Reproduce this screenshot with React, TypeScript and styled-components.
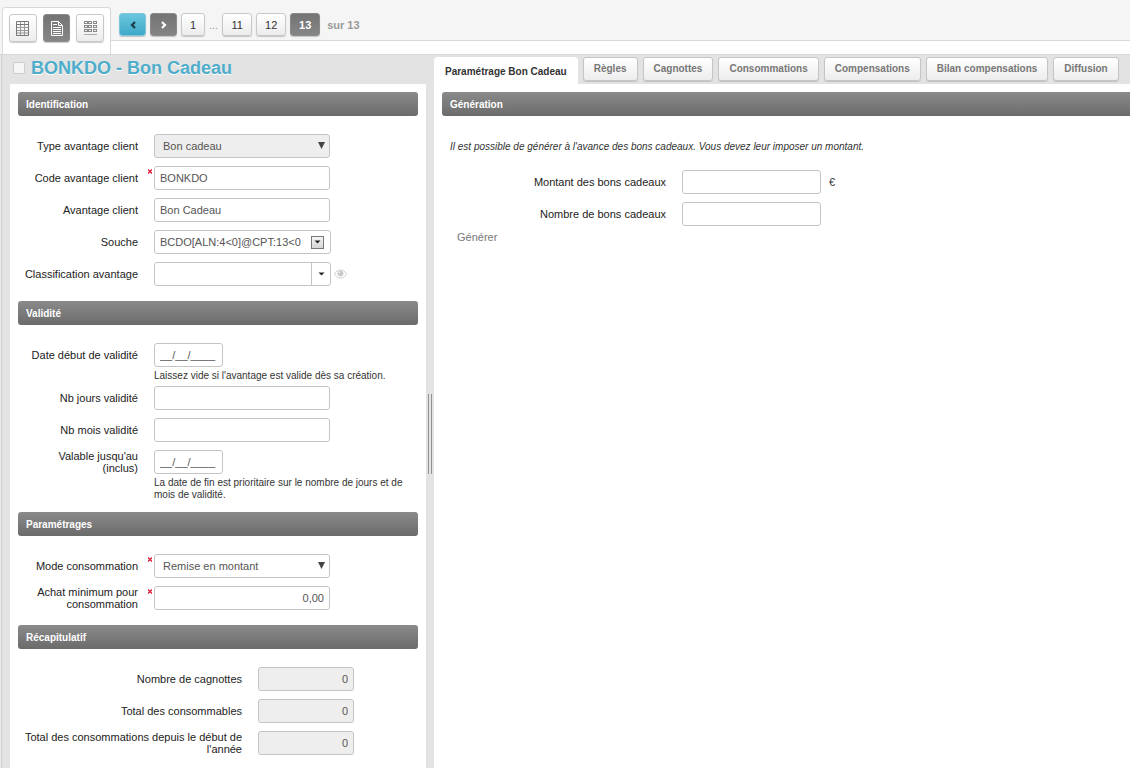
import React from "react";
import styled, { createGlobalStyle, css } from "styled-components";

const GlobalStyle = createGlobalStyle`
  * { box-sizing: border-box; }
  html, body, #root { height: 100%; }
  body {
    margin: 0;
    background: #fff;
    color: #333;
    font: 11px/12px "Liberation Sans", Arial, sans-serif;
    overflow: hidden;
  }
  button, input, select { font: inherit; margin: 0; }
`;

const Page = styled.div`
  display: flex;
  flex-direction: column;
  min-height: 100%;
`;

const TopBar = styled.header`
  display: flex;
  height: 54px;
  padding-left: 2px;
  background: #f5f5f5;
`;

const ViewTab = styled.div`
  display: flex;
  gap: 6px;
  width: 109px;
  margin-top: 7px;
  padding: 6px;
  background: #fff;
  border: 1px solid #d9d9d9;
  border-bottom: 0;
  border-radius: 3px 3px 0 0;
`;

const light = css`
  background: linear-gradient(#fff, #ececec);
  border-color: #c9c9c9;
  color: #333;
`;
const dark = css`
  background: linear-gradient(#747474, #858585);
  border-color: #8a8a8a;
  color: #fff;
  font-weight: bold;
`;
const blue = css`
  background: linear-gradient(#6ac6dd, #3fa9c9);
  border-color: #7fc4d8;
  color: #1c3c48;
`;

const tones = { light, dark, blue };

const ViewButton = styled.button<{ $tone: keyof typeof tones }>`
  display: flex;
  align-items: center;
  justify-content: center;
  width: 28px;
  height: 28px;
  padding: 0;
  border: 1px solid;
  border-radius: 3px;
  box-shadow: 0 1px 1px rgba(0, 0, 0, 0.2);
  ${(p) => tones[p.$tone]}
`;

const PagerArea = styled.div`
  flex: 1;
  background: #fff;
`;

const Pager = styled.nav`
  display: flex;
  align-items: center;
  gap: 4px;
  height: 41px;
  padding: 9px 8px 0;
  background: #f5f5f5;
  border-bottom: 1px solid #d9d9d9;
`;

const PageButton = styled.button<{ $tone: keyof typeof tones; $width: number }>`
  display: flex;
  align-items: center;
  justify-content: center;
  width: ${(p) => p.$width}px;
  height: 23px;
  padding: 0;
  border: 1px solid;
  border-radius: 3px;
  box-shadow: 0 1px 1px rgba(0, 0, 0, 0.2);
  ${(p) => tones[p.$tone]}
`;

const PagerText = styled.span<{ $bold?: boolean }>`
  color: #999;
  font-weight: ${(p) => (p.$bold ? "bold" : "normal")};
  padding: 0 ${(p) => (p.$bold ? 3 : 0)}px;
`;

const Body = styled.div`
  display: flex;
  flex: 1;
  background: #e3e3e3;
  border-top: 1px solid #d6d6d6;
`;

const LeftColumn = styled.section`
  display: flex;
  flex-direction: column;
  flex: 0 0 426px;
  padding-left: 9px;
  border-left: 1px solid #ececec;
  box-shadow: inset 2px 0 0 -1px #cfcfcf;
`;

const TitleBar = styled.div`
  display: flex;
  align-items: center;
  gap: 6px;
  height: 29px;
  padding: 0 3px 3px;
`;

const TitleCheck = styled.input`
  appearance: none;
  width: 12px;
  height: 12px;
  background: #f6f6f6;
  border: 1px solid #ccc;
  border-radius: 2px;
`;

const Title = styled.h1`
  margin: 0;
  color: #4eadca;
  font-size: 18px;
  line-height: 20px;
  text-shadow: 0 1px 0 #fff;
`;

const Panel = styled.div<{ $bleed?: boolean }>`
  flex: 1;
  padding: 8px ${(p) => (p.$bleed ? 0 : 8)}px 0 8px;
  background: #fff;
`;

const Splitter = styled.div`
  display: flex;
  justify-content: center;
  flex: 0 0 8px;
  padding-top: 339px;
`;

const SplitterGrip = styled.div`
  width: 4px;
  height: 80px;
  border: solid #929292;
  border-width: 0 1px;
`;

const RightColumn = styled.section`
  display: flex;
  flex-direction: column;
  flex: 1;
  min-width: 0;
`;

const TabBar = styled.div`
  display: flex;
  gap: 5px;
  height: 29px;
  padding-top: 2px;
`;

const Tab = styled.button<{ $active?: boolean }>`
  height: 24px;
  padding: 0 10px;
  border: 1px solid #c6c6c6;
  border-radius: 3px;
  background: linear-gradient(#fff, #ededed);
  box-shadow: 0 1px 1px rgba(0, 0, 0, 0.15);
  color: #777;
  font-size: 10px;
  font-weight: bold;
  white-space: nowrap;
  ${(p) =>
    p.$active &&
    css`
      height: 27px;
      padding-top: 2px;
      background: #fff;
      border-color: #fff;
      border-radius: 3px 3px 0 0;
      box-shadow: none;
      color: #333;
    `}
`;

const SectionTitle = styled.h2<{ $bleed?: boolean }>`
  height: 24px;
  margin: 0 0 18px;
  padding-left: 8px;
  background: linear-gradient(#8a8a8a, #6b6b6b);
  border-radius: ${(p) => (p.$bleed ? "3px 0 0 3px" : "3px")};
  color: #fff;
  font-size: 10px;
  line-height: 25px;
`;

const Section = styled.section`
  display: flow-root;
  padding-bottom: 7px;
`;

const Row = styled.div<{ $labelWidth: number; $hinted?: boolean }>`
  display: grid;
  grid-template-columns: ${(p) => p.$labelWidth}px 1fr;
  column-gap: 16px;
  margin-bottom: ${(p) => (p.$hinted ? 4 : 8)}px;
`;

const Label = styled.label`
  display: flex;
  align-items: center;
  justify-content: flex-end;
  height: 24px;
  padding-left: 4px;
  color: #222;
  text-align: right;
`;

const Control = styled.div`
  position: relative;
  display: flex;
  align-items: center;
`;

const Required = styled.span`
  position: absolute;
  left: -6px;
  top: 3px;
  line-height: 5px;
  svg { display: block; }
`;

const fieldLook = css`
  height: 24px;
  padding: 0 5px;
  background: #fff;
  border: 1px solid #c4c4c4;
  border-radius: 3px;
  color: #555;
  outline: 0;
`;

const Input = styled.input<{ $width: number; $right?: boolean }>`
  ${fieldLook}
  width: ${(p) => p.$width}px;
  text-align: ${(p) => (p.$right ? "right" : "left")};
  &:disabled { background: #eee; }
`;

const SelectBox = styled.div`
  position: relative;
  width: 176px;
`;

const Select = styled.select`
  ${fieldLook}
  appearance: none;
  display: block;
  width: 100%;
  padding: 0 8px;
  opacity: 1;
  &:disabled { background: #eee; }
`;

const SelectArrow = styled.svg`
  position: absolute;
  right: 5px;
  top: 8px;
  pointer-events: none;
`;

const Combo = styled.div`
  ${fieldLook}
  display: flex;
  align-items: center;
  width: 177px;
  padding: 0;
`;

const ComboInput = styled.input`
  flex: 1;
  min-width: 0;
  height: 22px;
  padding: 0 5px;
  border: 0;
  background: none;
  color: #555;
  outline: 0;
`;

const ComboButton = styled.button<{ $boxed?: boolean }>`
  display: flex;
  align-items: center;
  justify-content: center;
  padding: 0;
  ${(p) =>
    p.$boxed
      ? css`
          width: 13px;
          height: 13px;
          margin-right: 6px;
          background: linear-gradient(#f5f5f5, #d5d5d5);
          border: 1px solid #777;
        `
      : css`
          width: 19px;
          height: 22px;
          background: none;
          border: 0;
          border-left: 1px solid #c4c4c4;
        `}
`;

const EyeButton = styled.button`
  display: flex;
  margin-left: 3px;
  padding: 0;
  background: none;
  border: 0;
`;

const Hint = styled.p`
  grid-column: 2;
  margin: 3px 0 0;
  font-size: 10px;
  line-height: 12px;
`;

const Note = styled.p`
  margin: 0 0 17px;
  padding: 7px 8px 0;
  font-size: 10px;
  font-style: italic;
  line-height: 12px;
`;

const Unit = styled.span`
  margin-left: 8px;
`;

const Fields = styled.div`
  display: flex;
  flex-direction: column;
  margin-bottom: -3px;
`;

const GenerateLink = styled.a`
  display: inline-block;
  margin-left: 15px;
  color: #777;
  text-decoration: none;
`;

const TableIcon = () => (
  <svg width="13" height="15" viewBox="0 0 13 15" fill="none">
    <path stroke="#999" d="M4.5 1v13M8.5 1v13M1 6.500h11M1 9.500h11M1 12h11" />
    <path stroke="#777" d="M.5 .5h12v14H.5zM1 3.500h11" />
  </svg>
);

const DocumentIcon = () => (
  <svg width="12" height="15" viewBox="0 0 12 15" fill="none" stroke="#fff">
    <path d="M.5 .5h7l4 4v10H.5zM7.5 .5v4h4" />
    <path d="M2 3.5h4M2 6.5h8M2 8.5h8M2 10.5h8M2 12.5h8" />
  </svg>
);

const CardsIcon = () => (
  <svg width="13" height="15" viewBox="0 0 13 15" fill="none" stroke="#888">
    {[0, 4, 8].map((y) =>
      [0, 4, 9].map((x) => (
        <rect key={`${x}-${y}`} x={x + 0.5} y={y + 0.5} width="3" height="2" />
      ))
    )}
    <path stroke="#aaa" d="M0 13.5h13" />
  </svg>
);

const Chevron = ({ back }: { back?: boolean }) => (
  <svg width="6" height="8" viewBox="0 0 6 8" fill="none" stroke="currentColor" strokeWidth={2.2}>
    <path d={back ? "M5 1L2 4l3 3" : "M1 1l3 3-3 3"} />
  </svg>
);

const Caret = () => (
  <svg width="7" height="4" viewBox="0 0 7 4" fill="#222">
    <path d="M.5 .5h6L3.500 3.500z" />
  </svg>
);

const EyeIcon = () => (
  <svg width="13" height="10" viewBox="0 0 13 10" fill="none" stroke="#d0d0d0">
    <path d="M.5 5C2 2.200 4 1 6.500 1s4.500 1.200 6 4c-1.500 2.800-3.500 4-6 4S2 7.800.5 5z" />
    <circle cx="6.500" cy="4.500" r="2.600" fill="#c8c8c8" />
    <circle cx="5.600" cy="3.600" r=".6" fill="#fff" stroke="none" />
  </svg>
);

const RequiredMark = () => (
  <Required>
    <svg width="4" height="5" viewBox="0 0 4 5" stroke="#e0203c" strokeWidth={1.4}>
      <path d="M0 .5l4 4M4 .5l-4 4" />
    </svg>
  </Required>
);

type FieldProps = {
  id: string;
  label: string;
  labelWidth?: number;
  required?: boolean;
  hint?: string;
  children: React.ReactNode;
};

const Field = ({ id, label, labelWidth = 120, required, hint, children }: FieldProps) => (
  <Row $labelWidth={labelWidth} $hinted={!!hint}>
    <Label htmlFor={id}>{label}</Label>
    <Control>
      {required && <RequiredMark />}
      {children}
    </Control>
    {hint && <Hint>{hint}</Hint>}
  </Row>
);

const DropDown = ({ id, value, disabled }: { id: string; value: string; disabled?: boolean }) => (
  <SelectBox>
    <Select id={id} disabled={disabled} defaultValue={value}>
      <option>{value}</option>
    </Select>
    <SelectArrow width="7" height="8" viewBox="0 0 7 8" fill="#444">
      <path d="M0 0h7L3.500 7z" />
    </SelectArrow>
  </SelectBox>
);

const tabs = ["Règles", "Cagnottes", "Consommations", "Compensations", "Bilan compensations", "Diffusion"];
const totals = [
  "Nombre de cagnottes",
  "Total des consommables",
  "Total des consommations depuis le début de l'année",
];

export default function App() {
  return (
    <Page>
      <GlobalStyle />
      <TopBar>
        <ViewTab>
          <ViewButton $tone="light" aria-label="Liste"><TableIcon /></ViewButton>
          <ViewButton $tone="dark" aria-label="Fiche"><DocumentIcon /></ViewButton>
          <ViewButton $tone="light" aria-label="Vignettes"><CardsIcon /></ViewButton>
        </ViewTab>
        <PagerArea>
          <Pager>
            <PageButton $tone="blue" $width={27} aria-label="Précédent"><Chevron back /></PageButton>
            <PageButton $tone="dark" $width={27} aria-label="Suivant"><Chevron /></PageButton>
            <PageButton $tone="light" $width={24}>1</PageButton>
            <PagerText>...</PagerText>
            <PageButton $tone="light" $width={30}>11</PageButton>
            <PageButton $tone="light" $width={30}>12</PageButton>
            <PageButton $tone="dark" $width={30}>13</PageButton>
            <PagerText $bold>sur 13</PagerText>
          </Pager>
        </PagerArea>
      </TopBar>
      <Body>
        <LeftColumn>
          <TitleBar>
            <TitleCheck type="checkbox" aria-label="Sélectionner" />
            <Title>BONKDO - Bon Cadeau</Title>
          </TitleBar>
          <Panel>
            <Section>
              <SectionTitle>Identification</SectionTitle>
              <Field id="type" label="Type avantage client">
                <DropDown id="type" value="Bon cadeau" disabled />
              </Field>
              <Field id="code" label="Code avantage client" required>
                <Input id="code" $width={176} defaultValue="BONKDO" />
              </Field>
              <Field id="name" label="Avantage client">
                <Input id="name" $width={176} defaultValue="Bon Cadeau" />
              </Field>
              <Field id="souche" label="Souche">
                <Combo>
                  <ComboInput id="souche" defaultValue="BCDO[ALN:4<0]@CPT:13<0" />
                  <ComboButton $boxed aria-label="Choisir la souche"><Caret /></ComboButton>
                </Combo>
              </Field>
              <Field id="classification" label="Classification avantage">
                <Combo>
                  <ComboInput id="classification" />
                  <ComboButton aria-label="Choisir la classification"><Caret /></ComboButton>
                </Combo>
                <EyeButton aria-label="Voir"><EyeIcon /></EyeButton>
              </Field>
            </Section>
            <Section>
              <SectionTitle>Validité</SectionTitle>
              <Field id="start" label="Date début de validité" hint="Laissez vide si l'avantage est valide dès sa création.">
                <Input id="start" $width={69} defaultValue="__/__/____" />
              </Field>
              <Field id="days" label="Nb jours validité">
                <Input id="days" $width={176} />
              </Field>
              <Field id="months" label="Nb mois validité">
                <Input id="months" $width={176} />
              </Field>
              <Field
                id="end"
                label="Valable jusqu'au (inclus)"
                hint="La date de fin est prioritaire sur le nombre de jours et de mois de validité."
              >
                <Input id="end" $width={69} defaultValue="__/__/____" />
              </Field>
            </Section>
            <Section>
              <SectionTitle>Paramétrages</SectionTitle>
              <Field id="mode" label="Mode consommation" required>
                <DropDown id="mode" value="Remise en montant" />
              </Field>
              <Field id="minimum" label="Achat minimum pour consommation" required>
                <Input id="minimum" $width={176} $right defaultValue="0,00" />
              </Field>
            </Section>
            <Section>
              <SectionTitle>Récapitulatif</SectionTitle>
              {totals.map((label, i) => (
                <Field key={label} id={`total-${i}`} label={label} labelWidth={224}>
                  <Input id={`total-${i}`} $width={96} $right disabled defaultValue="0" />
                </Field>
              ))}
            </Section>
          </Panel>
        </LeftColumn>
        <Splitter>
          <SplitterGrip />
        </Splitter>
        <RightColumn>
          <TabBar>
            <Tab $active>Paramétrage Bon Cadeau</Tab>
            {tabs.map((name) => (
              <Tab key={name}>{name}</Tab>
            ))}
          </TabBar>
          <Panel $bleed>
            <SectionTitle $bleed>Génération</SectionTitle>
            <Note>
              Il est possible de générer à l'avance des bons cadeaux. Vous devez leur imposer un montant.
            </Note>
            <Fields>
              <Field id="amount" label="Montant des bons cadeaux" labelWidth={224}>
                <Input id="amount" $width={139} />
                <Unit>€</Unit>
              </Field>
              <Field id="count" label="Nombre de bons cadeaux" labelWidth={224}>
                <Input id="count" $width={139} />
              </Field>
            </Fields>
            <GenerateLink href="#">Générer</GenerateLink>
          </Panel>
        </RightColumn>
      </Body>
    </Page>
  );
}
